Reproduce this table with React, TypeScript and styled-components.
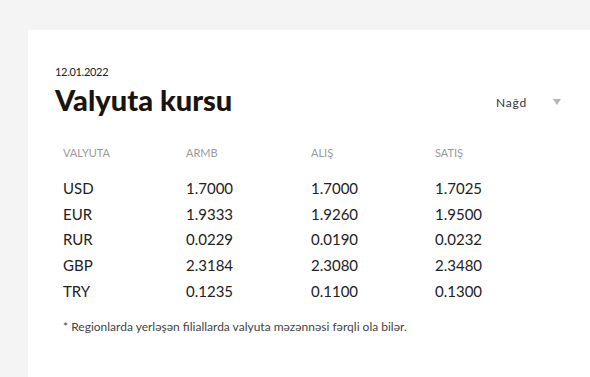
import styled, { createGlobalStyle } from "styled-components";

const GlobalStyle = createGlobalStyle`
  html, body {
    margin: 0;
    padding: 0;
    background: #f4f4f4;
    font-family: "Lato", "Liberation Sans", sans-serif;
  }
`;

const Page = styled.div`
  width: 590px;
  height: 377px;
  padding: 30px 0 0 28px;
  box-sizing: border-box;
  overflow: hidden;
`;

const Card = styled.div`
  background: #fff;
  height: 100%;
  padding: 35px 29px 0 27px;
  box-sizing: border-box;
`;

const DateLabel = styled.div`
  font-size: 11px;
  letter-spacing: -0.3px;
  color: #222;
  line-height: 14px;
`;

const HeaderRow = styled.div`
  display: flex;
  justify-content: space-between;
  align-items: center;
  margin-top: 4px;
`;

const Title = styled.h1`
  margin: 0;
  font-size: 29px;
  font-weight: 900;
  color: #1b140e;
  line-height: 34px;
`;

const Select = styled.div`
  display: flex;
  align-items: center;
  gap: 26px;
  font-size: 12px;
  color: #333;
  letter-spacing: 0.8px;
  margin-top: 4px;
`;

const Arrow = styled.span`
  width: 0;
  height: 0;
  border-left: 4px solid transparent;
  border-right: 4px solid transparent;
  border-top: 6px solid #b5b5b5;
`;

const Table = styled.div`
  margin: 24px 0 0 8px;
`;

const Row = styled.div<{ $head?: boolean }>`
  display: grid;
  grid-template-columns: 123px 125px 124px 1fr;
  height: ${({ $head }) => ($head ? "22px" : "25.8px")};
  align-items: center;
  font-size: ${({ $head }) => ($head ? "11px" : "15px")};
  color: ${({ $head }) => ($head ? "#9a9a9a" : "#222")};
  margin-bottom: ${({ $head }) => ($head ? "12px" : "0")};
`;

const Note = styled.div`
  margin: 15px 0 0 8px;
  font-size: 12px;
  color: #444;
`;

const rates = [
  ["USD", "1.7000", "1.7000", "1.7025"],
  ["EUR", "1.9333", "1.9260", "1.9500"],
  ["RUR", "0.0229", "0.0190", "0.0232"],
  ["GBP", "2.3184", "2.3080", "2.3480"],
  ["TRY", "0.1235", "0.1100", "0.1300"],
];

export default function App() {
  return (
    <>
      <GlobalStyle />
      <Page>
        <Card>
          <DateLabel>12.01.2022</DateLabel>
          <HeaderRow>
            <Title>Valyuta kursu</Title>
            <Select>
              Nağd
              <Arrow />
            </Select>
          </HeaderRow>
          <Table>
            <Row $head>
              <span>VALYUTA</span>
              <span>ARMB</span>
              <span>ALIŞ</span>
              <span>SATIŞ</span>
            </Row>
            {rates.map((r) => (
              <Row key={r[0]}>
                {r.map((c, i) => (
                  <span key={i}>{c}</span>
                ))}
              </Row>
            ))}
          </Table>
          <Note>* Regionlarda yerləşən filiallarda valyuta məzənnəsi fərqli ola bilər.</Note>
        </Card>
      </Page>
    </>
  );
}
